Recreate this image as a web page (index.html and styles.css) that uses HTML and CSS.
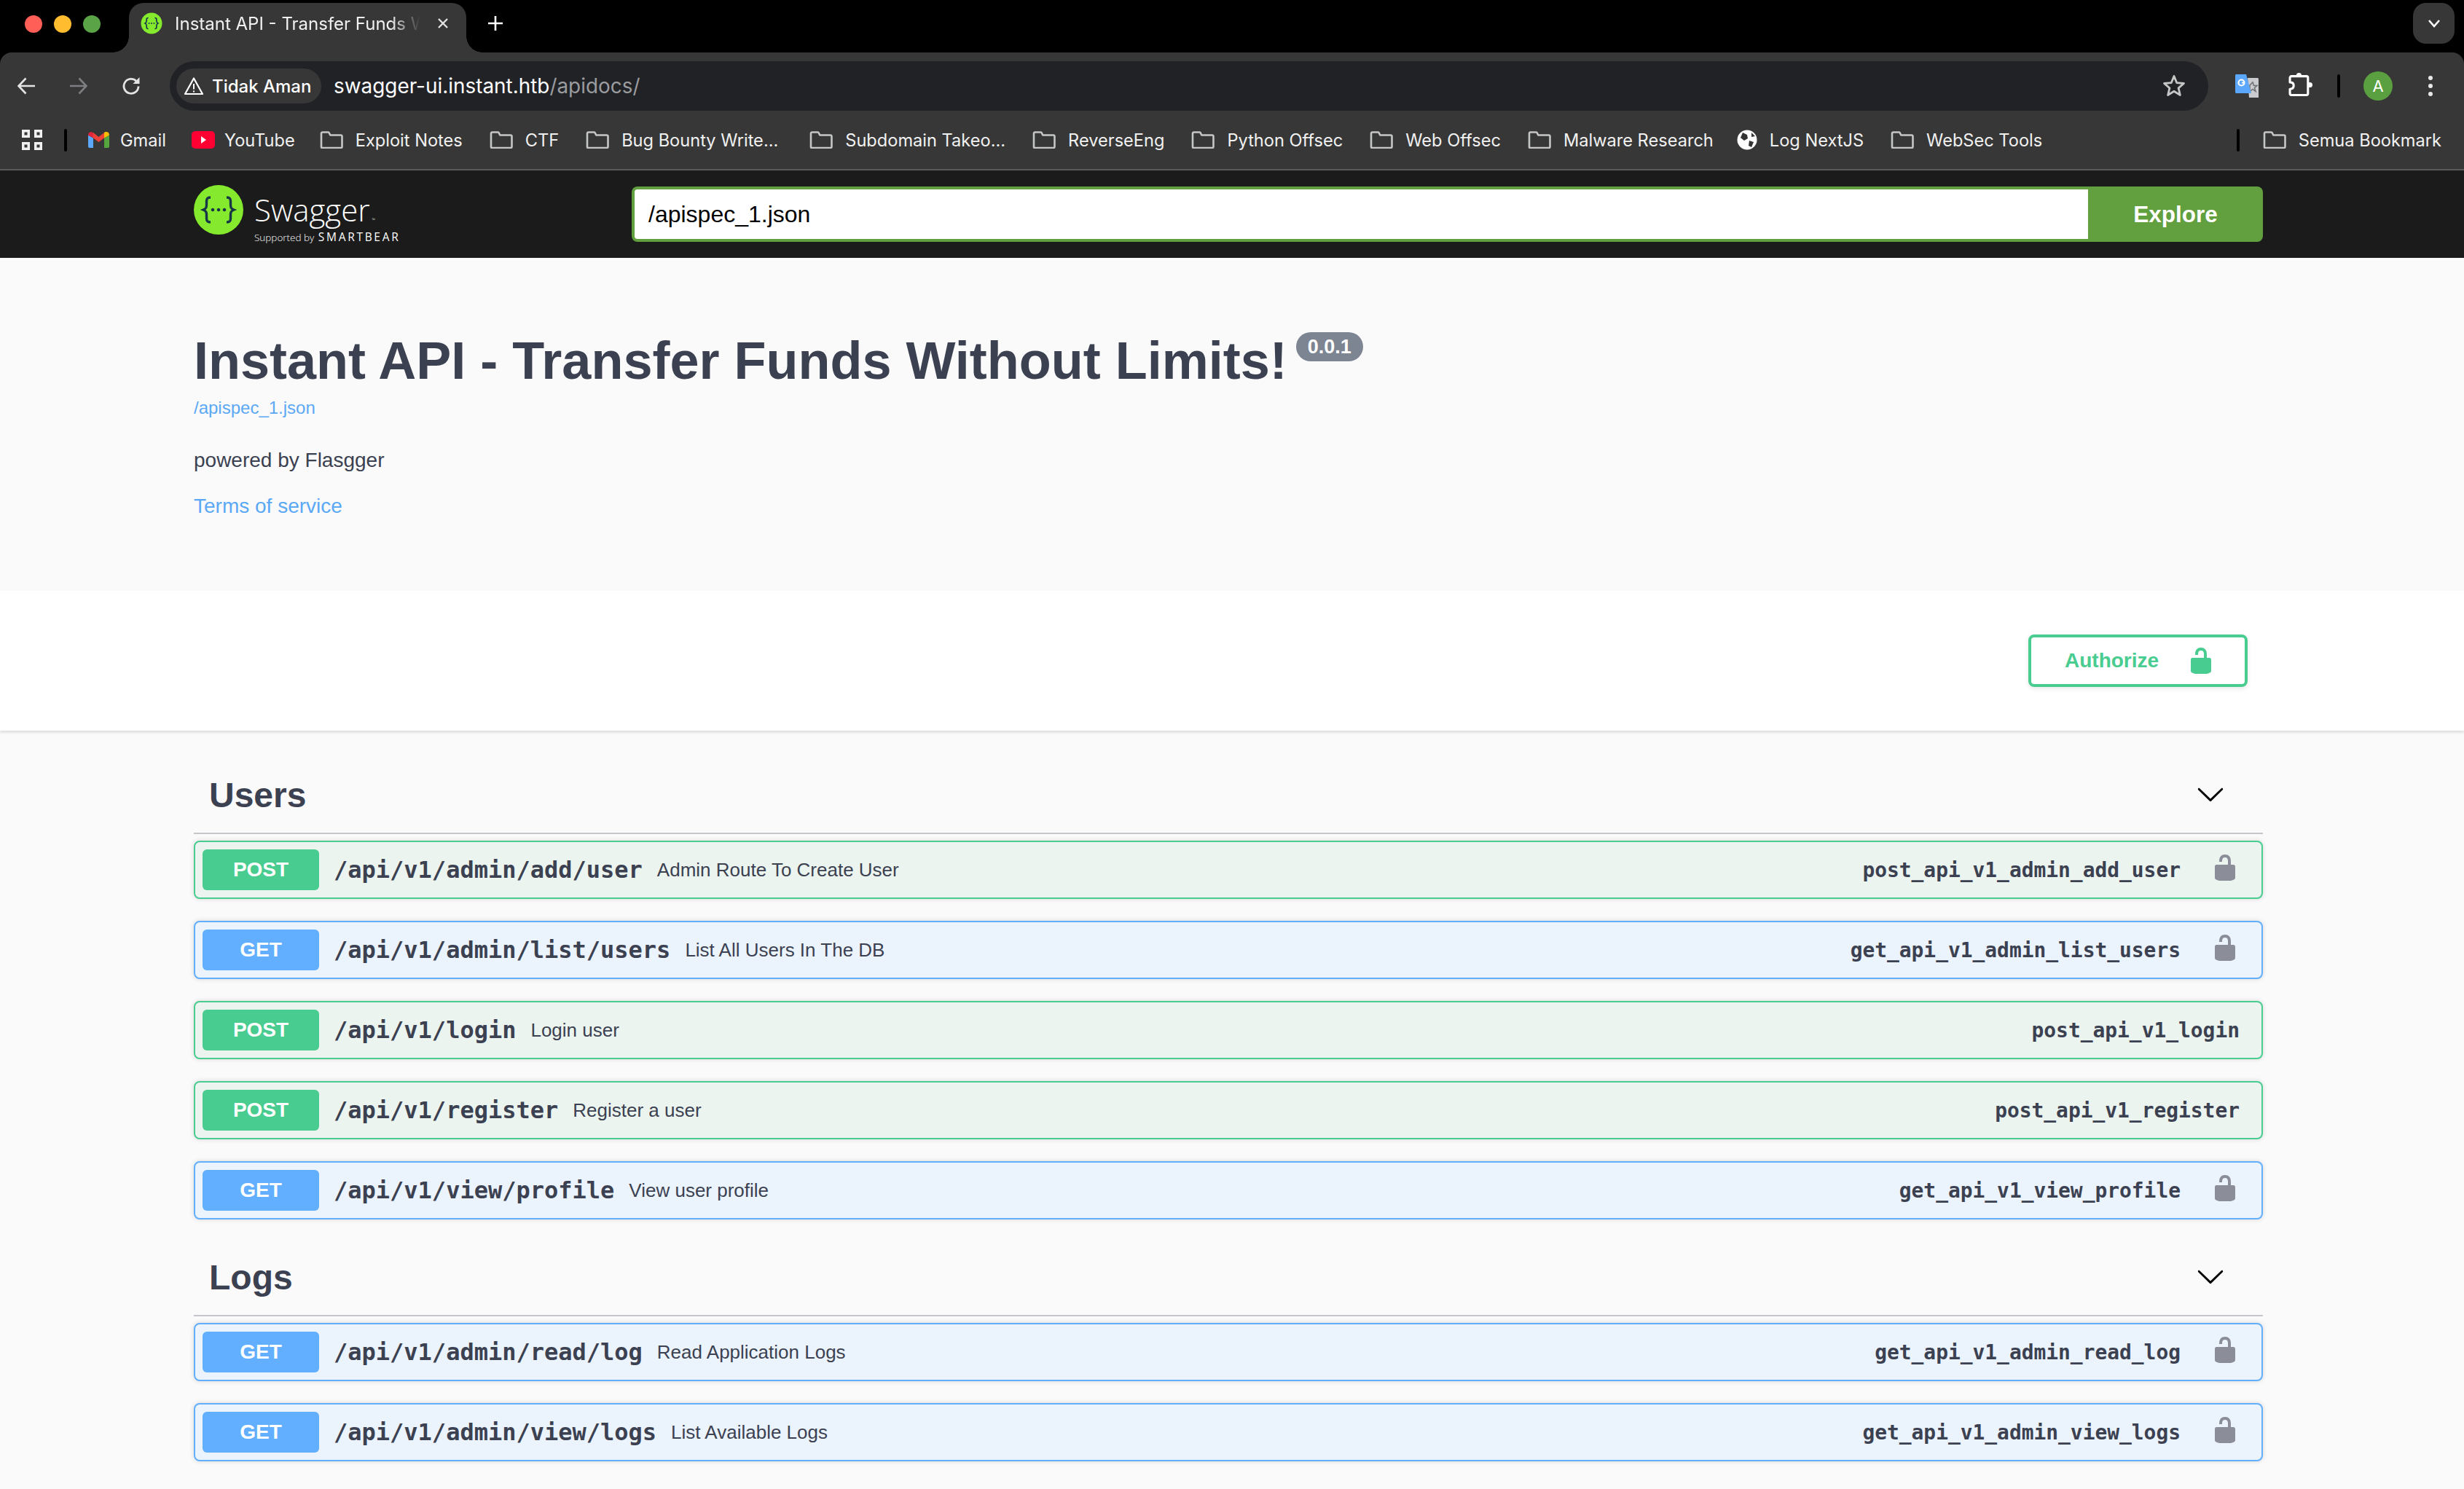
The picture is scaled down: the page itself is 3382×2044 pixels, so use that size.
FILE: index.html
```html
<!DOCTYPE html>
<html lang="id">
<head>
<meta charset="utf-8">
<title>Instant API - Transfer Funds Without Limits!</title>
<link rel="stylesheet" href="styles.css">
</head>
<body>
<svg class="defs" width="0" height="0" aria-hidden="true">
  <symbol id="folder" viewBox="0 0 32 24"><path d="M2 22V3.200C2 2.200 2.700 1.500 3.700 1.500h7.600c.6 0 1 .2 1.300.7l1.700 3.300h14.400c1 0 1.800.8 1.800 1.800v14.200c0 .9-.8 1.500-1.700 1.500H3.500C2.700 23 2 22.900 2 22z" fill="none" stroke="#c4c7c5" stroke-width="2.600" stroke-linejoin="round"/></symbol>
  <symbol id="unlock" viewBox="0 0 20 20"><path d="M15.8 8H14V5.6C14 2.703 12.665 1 10 1 7.334 1 6 2.703 6 5.6V6h2v-.801C8 3.754 8.797 3 10 3c1.203 0 2 .754 2 2.199V8H4c-.553 0-1 .646-1 1.199V17c0 .549.428 1.139.951 1.307l1.197.387C5.672 18.861 6.55 19 7.1 19h5.8c.549 0 1.428-.139 1.951-.307l1.196-.387c.524-.167.953-.757.953-1.306V9.199C17 8.646 16.352 8 15.8 8z"/></symbol>
  <symbol id="arrow" viewBox="0 0 20 20"><path d="M17.418 6.109c.272-.268.709-.268.979 0s.271.701 0 .969l-7.908 7.83c-.27.268-.707.268-.979 0l-7.908-7.83c-.27-.268-.27-.701 0-.969.271-.268.709-.268.979 0L10 13.25l7.418-7.141z"/></symbol>
</svg>

<header class="chrome">
  <div class="tabstrip">
    <div class="lights"><i class="light red"></i><i class="light amber"></i><i class="light green"></i></div>
    <div class="tab">
      <svg class="favicon" viewBox="0 0 30 30"><circle cx="15" cy="15" r="14.500" fill="#85ea2d"/><path d="M10.500 7.500c-2.500 0-2.300 1.500-2.300 3.500 0 2 .1 3-2 4 2.100 1 2 2 2 4s-.2 3.500 2.300 3.500M19.500 7.500c2.500 0 2.300 1.500 2.300 3.500 0 2-.1 3 2 4-2.100 1-2 2-2 4s.2 3.500-2.300 3.500" fill="none" stroke="#173647" stroke-width="1.700"/><circle cx="11.500" cy="15" r="1" fill="#173647"/><circle cx="15" cy="15" r="1" fill="#173647"/><circle cx="18.500" cy="15" r="1" fill="#173647"/></svg>
      <span class="tab-title">Instant API - Transfer Funds Without Limits!</span>
      <svg class="tab-close" viewBox="0 0 20 20"><path d="M4 4l12 12M16 4L4 16" stroke="#e3e3e3" stroke-width="2.400" fill="none"/></svg>
    </div>
    <svg class="newtab" viewBox="0 0 22 22"><path d="M11 1v20M1 11h20" stroke="#fff" stroke-width="2.600" fill="none"/></svg>
    <div class="tabmenu"><svg viewBox="0 0 20 20" class="tabmenu-icon"><path d="M3 6l7 8 7-8" stroke="#fff" stroke-width="2.600" fill="none"/></svg></div>
  </div>

  <div class="toolbar">
    <div class="navicons">
      <svg class="nav" viewBox="0 0 26 26"><path d="M25 13H3M12.500 2.500L2.500 13l10 10.500" fill="none" stroke="#e3e3e3" stroke-width="2.600"/></svg>
      <svg class="nav" viewBox="0 0 26 26"><path d="M1 13h22M13.500 2.500l10 10.500-10 10.500" fill="none" stroke="#7c7e82" stroke-width="2.600"/></svg>
      <svg class="nav" viewBox="0 0 26 26"><path d="M23 13.500a10 10 0 1 1-3-7.300" fill="none" stroke="#e3e3e3" stroke-width="2.800"/><path d="M24.500 1v9h-9z" fill="#e3e3e3"/></svg>
    </div>
    <div class="omnibox">
      <div class="secure">
        <svg class="warn" viewBox="0 0 28 26"><path d="M14 2.500L26 24H2z" fill="none" stroke="#fff" stroke-width="2.200" stroke-linejoin="round"/><path d="M14 10v7.500M14 19.500v2" stroke="#fff" stroke-width="2"/></svg>
        <span>Tidak Aman</span>
      </div>
      <div class="url">swagger-ui.instant.htb<span class="url-path">/apidocs/</span></div>
      <svg class="star" viewBox="0 0 32 32"><path d="M16 3.500l3.800 9.200 9.700.8-7.400 6.400 2.300 9.600L16 24.300l-8.400 5.200 2.300-9.600-7.400-6.400 9.700-.8z" fill="none" stroke="#c4c7c5" stroke-width="2.800" stroke-linejoin="round"/></svg>
    </div>
    <svg class="translate" viewBox="0 0 32 32"><path d="M17 5h13.500c.8 0 1.500.7 1.500 1.500V32H19z" fill="#c9cbce"/><path d="M20 15l4-4 1.500 4.500h4.500l-3.500 3 1.500 5-4-3-4 3z" fill="none" stroke="#6d7075" stroke-width="1.500"/><path d="M1.500 0H15l7 26H1.500C.7 26 0 25.300 0 24.500V1.500C0 .7.700 0 1.500 0z" fill="#5aa7fb"/><circle cx="8.500" cy="11.500" r="4" fill="none" stroke="#fff" stroke-width="2.200"/><path d="M9 11.500h4" stroke="#fff" stroke-width="2"/></svg>
    <svg class="puzzle" viewBox="0 0 32 32"><circle cx="14" cy="3.500" r="3.500" fill="#fff"/><circle cx="28.500" cy="16" r="3.500" fill="#fff"/><path d="M4 4.500h20a2 2 0 0 1 2 2v21a2 2 0 0 1-2 2H4a2 2 0 0 1-2-2v-6c4 0 5-2.500 5-4.500S6 12.500 2 12.500v-6a2 2 0 0 1 2-2z" fill="#373737" stroke="#fff" stroke-width="3" stroke-linejoin="round"/></svg>
    <i class="vsep tool-sep"></i>
    <div class="avatar">A</div>
    <div class="kebab"><i></i><i></i><i></i></div>
  </div>

  <nav class="bookmarks">
    <svg class="apps" viewBox="0 0 28 28"><path d="M1.750 1.750h7.500v7.500h-7.500zM18.750 1.750h7.500v7.500h-7.500zM1.750 18.750h7.500v7.500h-7.500zM18.750 18.750h7.500v7.500h-7.500z" fill="none" stroke="#f0f0f0" stroke-width="3.500"/></svg>
    <i class="vsep bm-sep"></i>
    <div class="bm bm-gmail-item"><svg class="bm-gmail" viewBox="0 0 29 22"><path d="M0 4.500V20c0 1.100.8 2 1.800 2H7V8.500z" fill="#5aa7fb"/><path d="M22 8.500V22h5.200c1 0 1.800-.9 1.800-2V4.500z" fill="#55a63f"/><path d="M7 8.500l7.500 5.500L22 8.500V1l-7.500 6L7 1z" fill="#ee4238"/><path d="M0 4.500l7 4V1.500C5 -.5 0 -.5 0 4.500z" fill="#e0263a"/><path d="M22 1v7.500l7-4c0-5-5-5.500-7-3.500z" fill="#fbbc04"/></svg>Gmail</div>
    <div class="bm bm-yt-item"><svg class="bm-yt" viewBox="0 0 32 24"><rect width="32" height="24" rx="5" fill="#ff0033"/><path d="M13 7l7 5-7 5z" fill="#fff"/></svg>YouTube</div>
    <div class="bm"><svg class="bm-folder"><use href="#folder"/></svg>Exploit Notes</div>
    <div class="bm"><svg class="bm-folder"><use href="#folder"/></svg>CTF</div>
    <div class="bm bm-trunc"><svg class="bm-folder"><use href="#folder"/></svg>Bug Bounty Write...</div>
    <div class="bm"><svg class="bm-folder"><use href="#folder"/></svg>Subdomain Takeo...</div>
    <div class="bm"><svg class="bm-folder"><use href="#folder"/></svg>ReverseEng</div>
    <div class="bm"><svg class="bm-folder"><use href="#folder"/></svg>Python Offsec</div>
    <div class="bm"><svg class="bm-folder"><use href="#folder"/></svg>Web Offsec</div>
    <div class="bm bm-malware"><svg class="bm-folder"><use href="#folder"/></svg>Malware Research</div>
    <div class="bm"><svg class="bm-globe" viewBox="0 0 28 28"><circle cx="14" cy="14" r="13.500" fill="#fff"/><path d="M8 4l6 3 1 5-5 3-5-4zM17 15l6 2-3 7-4-2zM20 4l5 5-5 1z" fill="#333"/></svg>Log NextJS</div>
    <div class="bm"><svg class="bm-folder"><use href="#folder"/></svg>WebSec Tools</div>
    <i class="vsep all-sep"></i>
    <div class="bm bm-all"><svg class="bm-folder"><use href="#folder"/></svg>Semua Bookmark</div>
  </nav>
  <div class="chrome-line"></div>
</header>

<section class="topbar">
  <div class="wrap topbar-in">
    <div class="logo">
      <svg class="logo-mark" viewBox="0 0 68 68"><circle cx="34" cy="34" r="34" fill="#85ea2d"/><path d="M23 17c-6 0-5.500 3.500-5.500 8 0 5 .3 7-4.500 9 4.800 2 4.500 4 4.500 9 0 4.500-.5 8 5.500 8M45 17c6 0 5.500 3.500 5.500 8 0 5-.3 7 4.500 9-4.800 2-4.500 4-4.500 9 0 4.500.5 8-5.500 8" fill="none" stroke="#173647" stroke-width="3.400"/><circle cx="26" cy="34" r="2.300" fill="#173647"/><circle cx="34" cy="34" r="2.300" fill="#173647"/><circle cx="42" cy="34" r="2.300" fill="#173647"/></svg>
      <div class="logo-text">
        <div class="logo-name">Swagger<span class="logo-tm">™</span></div>
        <div class="logo-sub"><span>Supported by</span> <b>SMARTBEAR</b></div>
      </div>
    </div>
    <div class="explore">
      <div class="explore-input">/apispec_1.json</div>
      <div class="explore-btn">Explore</div>
    </div>
  </div>
</section>

<section class="info">
  <div class="wrap">
    <div class="title-row">
      <h1 class="title">Instant API - Transfer Funds Without Limits!</h1>
      <span class="version">0.0.1</span>
    </div>
    <a class="spec-link">/apispec_1.json</a>
    <p class="powered">powered by Flasgger</p>
    <a class="terms">Terms of service</a>
  </div>
</section>

<section class="scheme">
  <div class="wrap scheme-in">
    <div class="authorize">Authorize<svg class="auth-lock"><use href="#unlock"/></svg></div>
  </div>
</section>

<main class="wrap ops">
  <section class="tag">
    <div class="tag-head"><h2>Users</h2><svg class="tag-arrow"><use href="#arrow"/></svg></div>
    <div class="op post"><span class="method">POST</span><span class="path">/api/v1/admin/add/user</span><span class="desc">Admin Route To Create User</span><span class="opid">post_api_v1_admin_add_user</span><svg class="op-lock"><use href="#unlock"/></svg></div>
    <div class="op get"><span class="method">GET</span><span class="path">/api/v1/admin/list/users</span><span class="desc">List All Users In The DB</span><span class="opid">get_api_v1_admin_list_users</span><svg class="op-lock"><use href="#unlock"/></svg></div>
    <div class="op post"><span class="method">POST</span><span class="path">/api/v1/login</span><span class="desc">Login user</span><span class="opid">post_api_v1_login</span></div>
    <div class="op post"><span class="method">POST</span><span class="path">/api/v1/register</span><span class="desc">Register a user</span><span class="opid">post_api_v1_register</span></div>
    <div class="op get"><span class="method">GET</span><span class="path">/api/v1/view/profile</span><span class="desc">View user profile</span><span class="opid">get_api_v1_view_profile</span><svg class="op-lock"><use href="#unlock"/></svg></div>
  </section>
  <section class="tag">
    <div class="tag-head"><h2>Logs</h2><svg class="tag-arrow"><use href="#arrow"/></svg></div>
    <div class="op get"><span class="method">GET</span><span class="path">/api/v1/admin/read/log</span><span class="desc">Read Application Logs</span><span class="opid">get_api_v1_admin_read_log</span><svg class="op-lock"><use href="#unlock"/></svg></div>
    <div class="op get"><span class="method">GET</span><span class="path">/api/v1/admin/view/logs</span><span class="desc">List Available Logs</span><span class="opid">get_api_v1_admin_view_logs</span><svg class="op-lock"><use href="#unlock"/></svg></div>
  </section>
</main>
</body>
</html>
```

FILE: styles.css
```css
* { box-sizing: border-box; }
html, body { margin: 0; padding: 0; height: 2044px; overflow: hidden; }
body { background: #fafafa; color: #3b4151; font-family: "Liberation Sans", Arial, sans-serif; }
.defs { position: absolute; }

/* Browser chrome */
.chrome { background: #000; font-family: Inter, "Noto Sans", sans-serif; color: #fff; }
.tabstrip { height: 72px; display: flex; align-items: flex-start; padding-left: 34px; }
.lights { display: flex; gap: 16px; margin-top: 21px; width: 143px; }
.light { width: 24px; height: 24px; border-radius: 50%; }
.red { background: #ff5f57; }
.amber { background: #febc2e; }
.green { background: #5aa447; }
.tab { position: relative; width: 463px; height: 68px; margin-top: 4px; background: #373737; border-radius: 20px 20px 0 0; display: flex; align-items: center; padding: 0 0 12px 16px; }
.tab::before, .tab::after { content: ""; position: absolute; bottom: 0; width: 22px; height: 22px; }
.tab::before { left: -22px; background: radial-gradient(circle at 0 0, #000 21.5px, #373737 22px); }
.tab::after { right: -22px; background: radial-gradient(circle at 100% 0, #000 21.5px, #373737 22px); }
.favicon { width: 30px; height: 30px; flex: none; }
.tab-title { margin-left: 17px; width: 337px; font-size: 24px; white-space: nowrap; overflow: hidden; color: #f1f1f1; -webkit-mask-image: linear-gradient(90deg, #000 88%, transparent 100%); mask-image: linear-gradient(90deg, #000 88%, transparent 100%); }
.tab-close { width: 20px; height: 20px; margin-left: 21px; flex: none; }
.newtab { width: 22px; height: 22px; margin: 21px 0 0 29px; }
.tabmenu { margin: 4px 13px 0 auto; width: 57px; height: 56px; border-radius: 18px; background: #373737; display: flex; align-items: center; justify-content: center; }
.tabmenu-icon { width: 20px; height: 20px; }

.toolbar { height: 80px; background: #373737; border-radius: 16px 16px 0 0; padding-top: 12px; display: flex; align-items: center; }
.navicons { display: flex; gap: 46px; margin-left: 23px; width: 210px; }
.nav { width: 26px; height: 26px; flex: none; }
.omnibox { width: 2798px; height: 68px; background: #212226; border-radius: 34px; display: flex; align-items: center; padding-left: 9px; flex: none; }
.secure { width: 199px; height: 48px; background: #373737; border-radius: 24px; display: flex; align-items: center; padding-left: 10px; font-size: 24px; font-weight: 500; }
.warn { width: 28px; height: 26px; margin-right: 11px; }
.url { margin-left: 17px; font-size: 27.900px; white-space: nowrap; }
.url-path { color: #9a9c9f; }
.star { width: 32px; height: 32px; margin-left: auto; margin-right: 31px; margin-top: -2px; }
.translate { width: 32px; height: 32px; margin-left: 37px; flex: none; }
.puzzle { width: 33px; height: 33px; margin-left: 41px; margin-top: -3px; flex: none; }
.vsep { display: block; flex: none; width: 4px; background: #000; border-radius: 2px; }
.tool-sep { height: 32px; margin-left: 34px; }
.avatar { width: 40px; height: 40px; margin-left: 32px; border-radius: 50%; background: #5a9f40; font-size: 22px; display: flex; align-items: center; justify-content: center; flex: none; }
.kebab { margin-left: 49px; display: flex; flex-direction: column; gap: 5px; }
.kebab i { display: block; width: 6px; height: 6px; background: #e8e8e8; border-radius: 50%; }

.bookmarks { height: 80px; background: #373737; display: flex; align-items: center; padding-left: 30px; font-size: 23.600px; white-space: nowrap; color: #f1f1f1; }
.apps { width: 28px; height: 28px; flex: none; }
.bm-sep { height: 31px; margin: 0 29px 0 30px; }
.bm { display: flex; align-items: center; margin-right: 37px; flex: none; }
.bm-gmail-item { margin-right: 35px; }
.bm-yt-item { margin-right: 34px; }
.bm-trunc { margin-right: 43px; }
.bm-malware { margin-right: 32px; }
.bm-gmail { width: 29px; height: 22px; margin-right: 15px; }
.bm-yt { width: 32px; height: 24px; margin-right: 13px; }
.bm-folder { width: 32px; height: 24px; margin-right: 17px; }
.bm-globe { width: 28px; height: 28px; margin-right: 17px; }
.all-sep { height: 31px; margin-left: auto; margin-right: 32px; }
.bm-all { margin-right: 31px; }
.chrome-line { height: 2px; background: #5a5a5a; }

/* Swagger top bar */
.wrap { width: 2840px; margin-left: 266px; }
.topbar { height: 120px; background: #1b1b1b; color: #fff; }
.topbar-in { height: 100%; display: flex; align-items: center; }
.logo { display: flex; align-items: flex-start; width: 601px; height: 100%; flex: none; }
.logo-mark { width: 68px; height: 68px; flex: none; margin-top: 20px; }
.logo-text { margin: 32px 0 0 15px; }
.logo-name { font: 300 42px/44px "Open Sans", sans-serif; letter-spacing: 0; }
.logo-tm { font-size: 6px; margin-left: 3px; }
.logo-sub { font: 300 13.500px/16px "Open Sans", sans-serif; margin-top: -7px; white-space: nowrap; }
.logo-sub b { font-weight: 400; font-size: 15.500px; letter-spacing: 2.700px; margin-left: 2px; }
.explore { display: flex; width: 2239px; height: 76px; }
.explore-input { flex: 1; background: #fff; border: 4px solid #62a03f; border-right: 0; border-radius: 8px 0 0 8px; color: #000; font-size: 32px; padding-left: 19px; display: flex; align-items: center; }
.explore-btn { width: 240px; background: #62a03f; border-radius: 0 8px 8px 0; font-weight: 700; font-size: 31.500px; display: flex; align-items: center; justify-content: center; }

/* Info */
.info { height: 457px; padding-top: 97px; }
.title-row { display: flex; align-items: flex-start; gap: 12px; }
.title { margin: 0; font-size: 72px; line-height: 88px; font-weight: 700; white-space: nowrap; color: #3b4151; }
.version { margin-top: 5px; height: 40px; width: 92px; background: #7d8492; border-radius: 20px; color: #fff; font-size: 27px; font-weight: 700; display: flex; align-items: center; justify-content: center; }
.spec-link, .terms { display: block; color: #5ba8f5; }
.spec-link { margin-top: 6px; font-size: 24px; line-height: 30px; }
.powered { margin: 42px 0 0; font-size: 28px; line-height: 30px; color: #3b4151; }
.terms { margin-top: 33px; font-size: 28px; line-height: 30px; }

/* Authorize */
.scheme { height: 192px; background: #fff; box-shadow: 0 3px 3px rgba(0, 0, 0, .1); position: relative; }
.scheme-in { display: flex; justify-content: flex-end; padding: 60px 21px 0 0; }
.authorize { width: 301px; height: 72px; border: 4px solid #49cc90; border-radius: 8px; color: #49cc90; font-weight: 700; font-size: 28px; display: flex; align-items: center; padding-left: 46px; box-shadow: 0 2px 6px rgba(0, 0, 0, .1); }
.auth-lock { width: 40px; height: 40px; margin-left: 38px; fill: #49cc90; }

/* Operations */
.ops { padding-top: 39px; }
.tag-head { height: 103px; border-bottom: 2px solid #c4c6cb; display: flex; align-items: flex-end; padding: 0 52px 21px 21px; justify-content: space-between; margin-bottom: 9px; }
.tag-head h2 { margin: 0; font-size: 48px; line-height: 60px; font-weight: 700; color: #3b4151; }
.tag-arrow { width: 40px; height: 40px; fill: #000; margin-bottom: 12px; }
.op { height: 80px; margin-bottom: 30px; border: 2px solid; border-radius: 8px; display: flex; align-items: center; padding: 0 30px 0 10px; box-shadow: 0 0 6px rgba(0, 0, 0, .15); }
.post { background: #ebf4ef; border-color: #49cc90; }
.get { background: #ebf3fd; border-color: #61affe; }
.method { width: 160px; height: 56px; border-radius: 6px; color: #fff; font-weight: 700; font-size: 28px; display: flex; align-items: center; justify-content: center; flex: none; }
.post .method { background: #49cc90; }
.get .method { background: #61affe; }
.path { margin-left: 20px; font: 700 32px "DejaVu Sans Mono", "Liberation Mono", monospace; white-space: nowrap; color: #3b4151; }
.desc { margin-left: 20px; font-size: 26px; white-space: nowrap; color: #3b4151; }
.opid { margin-left: auto; font: 700 27.900px "DejaVu Sans Mono", "Liberation Mono", monospace; white-space: nowrap; color: #3b4151; }
.op-lock { width: 40px; height: 40px; margin-left: 41px; margin-top: -6px; fill: #8b8e98; flex: none; }
```
